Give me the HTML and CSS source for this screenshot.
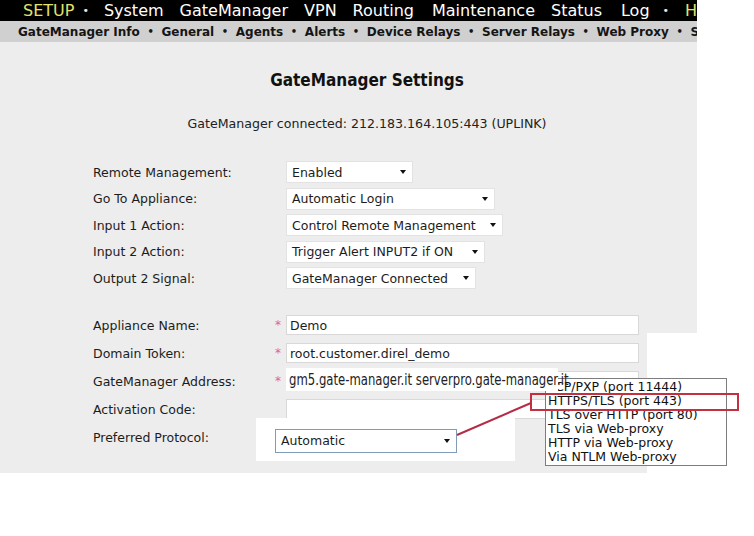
FILE: index.html
```html
<!DOCTYPE html>
<html>
<head>
<meta charset="utf-8">
<link rel="stylesheet" href="styles.css">
</head>
<body>
<div class="page">
  <div class="panel">
    <nav class="topnav">
      <span class="hl">SETUP</span><span class="dot">•</span><span>System</span><span>GateManager</span><span>VPN</span><span>Routing</span><span class="wide2">Maintenance</span><span>Status</span><span class="wide3">Log</span><span class="dot dot2">•</span><span class="hl">Help</span>
    </nav>
    <nav class="subnav">
      <span>GateManager Info</span><span class="sdot">•</span><span>General</span><span class="sdot">•</span><span>Agents</span><span class="sdot">•</span><span>Alerts</span><span class="sdot">•</span><span>Device Relays</span><span class="sdot">•</span><span>Server Relays</span><span class="sdot">•</span><span>Web Proxy</span><span class="sdot">•</span><span>Status</span>
    </nav>
    <main class="content">
      <h1 class="title">GateManager Settings</h1>
      <p class="status">GateManager connected: 212.183.164.105:443 (UPLINK)</p>
      <div class="form">
        <div class="group group1">
          <div class="row"><span class="label">Remote Management:</span><span class="star"></span><div class="sel sel-a">Enabled<i class="caret"></i></div></div>
          <div class="row"><span class="label">Go To Appliance:</span><span class="star"></span><div class="sel sel-b">Automatic Login<i class="caret"></i></div></div>
          <div class="row"><span class="label">Input 1 Action:</span><span class="star"></span><div class="sel sel-c">Control Remote Management<i class="caret"></i></div></div>
          <div class="row"><span class="label">Input 2 Action:</span><span class="star"></span><div class="sel sel-d">Trigger Alert INPUT2 if ON<i class="caret"></i></div></div>
          <div class="row"><span class="label">Output 2 Signal:</span><span class="star"></span><div class="sel sel-e">GateManager Connected<i class="caret"></i></div></div>
        </div>
        <div class="group group2">
          <div class="row"><span class="label">Appliance Name:</span><span class="star">*</span><div class="inp">Demo</div></div>
          <div class="row"><span class="label">Domain Token:</span><span class="star">*</span><div class="inp">root.customer.direl_demo</div></div>
          <div class="row"><span class="label">GateManager Address:</span><span class="star">*</span><div class="inp gm"><span class="gm-text"><span class="gm-inner">gm5.gate-manager.it serverpro.gate-manager.it</span></span></div></div>
          <div class="row"><span class="label">Activation Code:</span><span class="star"></span><div class="inp"></div></div>
          <div class="row"><span class="label">Preferred Protocol:</span><span class="star"></span><div class="paste"><div class="sel proto">Automatic<i class="caret"></i></div></div></div>
        </div>
      </div>
    </main>
  </div>

  <div class="whiteblock"></div>
  <ul class="dropdown">
    <li>TCP/PXP (port 11444)</li>
    <li>HTTPS/TLS (port 443)</li>
    <li>TLS over HTTP (port 80)</li>
    <li>TLS via Web-proxy</li>
    <li>HTTP via Web-proxy</li>
    <li>Via NTLM Web-proxy</li>
  </ul>
  <div class="highlight"></div>
  <svg class="pointer" width="754" height="536" viewBox="0 0 754 536">
    <line x1="457" y1="435" x2="531" y2="403" stroke="#b42c46" stroke-width="2"/>
  </svg>
</div>
</body>
</html>
```
FILE: styles.css
```css
* { box-sizing: border-box; }

body {
  margin: 0;
  background: #fff;
  font-family: "DejaVu Sans", Verdana, sans-serif;
}

.page {
  position: relative;
  width: 754px;
  height: 536px;
  overflow: hidden;
}

.panel {
  width: 697px;
  height: 473px;
  background: #ededed;
}

.topnav {
  display: flex;
  align-items: center;
  gap: 16px;
  height: 21px;
  padding-left: 23px;
  background: #000;
  color: #fff;
  font-size: 16px;
  white-space: nowrap;
  overflow: hidden;
}

.topnav .hl { color: #e0e36c; }
.topnav .dot { font-size: 11px; margin: 0 -1px 0 -8px; color: #e8e8e8; }
.topnav .dot2 { margin: 0 0 0 -3px; }
.topnav .wide2 { margin-left: 2px; }
.topnav .wide3 { margin-left: 3px; }

.subnav {
  display: flex;
  align-items: center;
  gap: 7px;
  height: 21px;
  padding-left: 18px;
  background: #d0d0d0;
  color: #151515;
  font-size: 12px;
  font-weight: bold;
  white-space: nowrap;
  overflow: hidden;
}

.subnav .sdot { font-size: 10px; margin: 0 0.6px; }

.title {
  margin: 28px 0 0;
  padding-left: 37px;
  text-align: center;
  font-family: "DejaVu Sans Condensed", "DejaVu Sans", sans-serif;
  font-stretch: condensed;
  font-size: 17px;
  line-height: 20px;
  font-weight: bold;
  color: #111;
}

.status {
  margin: 26px 0 0;
  padding-left: 37px;
  text-align: center;
  font-size: 12.6px;
  line-height: 16px;
  color: #222;
}

.form {
  margin-top: 26.75px;
  padding-left: 93px;
}

.row {
  display: flex;
  align-items: center;
  font-size: 12.5px;
  color: #1c1c1c;
}

.group1 .row { height: 26.5px; }
.group2 { margin-top: 19.75px; }
.group2 .row { height: 28px; }

.label { width: 182px; flex: none; }

.star {
  width: 11px;
  flex: none;
  color: #e0647a;
  font-size: 12px;
}

.sel {
  display: flex;
  align-items: center;
  height: 22px;
  padding: 0 6px 0 5px;
  background: #fff;
  border: 1px solid #e3e3e3;
  white-space: nowrap;
}

.caret {
  margin-left: auto;
  width: 0;
  height: 0;
  border-left: 3.5px solid transparent;
  border-right: 3.5px solid transparent;
  border-top: 4px solid #111;
}

.sel-a { width: 127px; }
.sel-b { width: 209px; }
.sel-c { width: 217px; }
.sel-d { width: 199px; }
.sel-e { width: 190px; }

.inp {
  display: flex;
  align-items: center;
  width: 353px;
  height: 20px;
  padding-left: 3px;
  background: #fff;
  border: 1px solid #d8d8d8;
}

.inp.gm { position: relative; }

.gm-text {
  position: absolute;
  left: -1px;
  top: -4px;
  z-index: 3;
  width: 272px;
  height: 23px;
  padding-left: 3px;
  background: #fff;
  font-family: "DejaVu Sans Condensed", "DejaVu Sans", sans-serif;
  font-stretch: condensed;
  font-size: 16px;
  line-height: 23px;
  color: #222;
  white-space: nowrap;
}

.gm-inner {
  display: inline-block;
  transform: scaleX(0.81);
  transform-origin: left center;
}

.paste {
  margin-top: 4px;
  margin-left: -30px;
  padding: 11px 58px 8px 19px;
  background: #fff;
}

.sel.proto {
  width: 182px;
  height: 24px;
  border: 1px solid #7f9db9;
}

.whiteblock {
  position: absolute;
  left: 647px;
  top: 333px;
  width: 60px;
  height: 140px;
  background: #fff;
}

.dropdown {
  position: absolute;
  left: 545px;
  top: 378px;
  z-index: 1;
  width: 182px;
  height: 88px;
  margin: 0;
  padding: 1px 0 0 2px;
  list-style: none;
  background: #fff;
  border: 1px solid #7d7d7d;
  font-size: 12.5px;
  line-height: 14px;
  color: #111;
  white-space: nowrap;
}

.highlight {
  position: absolute;
  left: 530px;
  top: 393px;
  z-index: 4;
  width: 209px;
  height: 18px;
  border: 2px solid #c3303f;
}

.pointer {
  position: absolute;
  left: 0;
  top: 0;
  z-index: 5;
  pointer-events: none;
}
```
